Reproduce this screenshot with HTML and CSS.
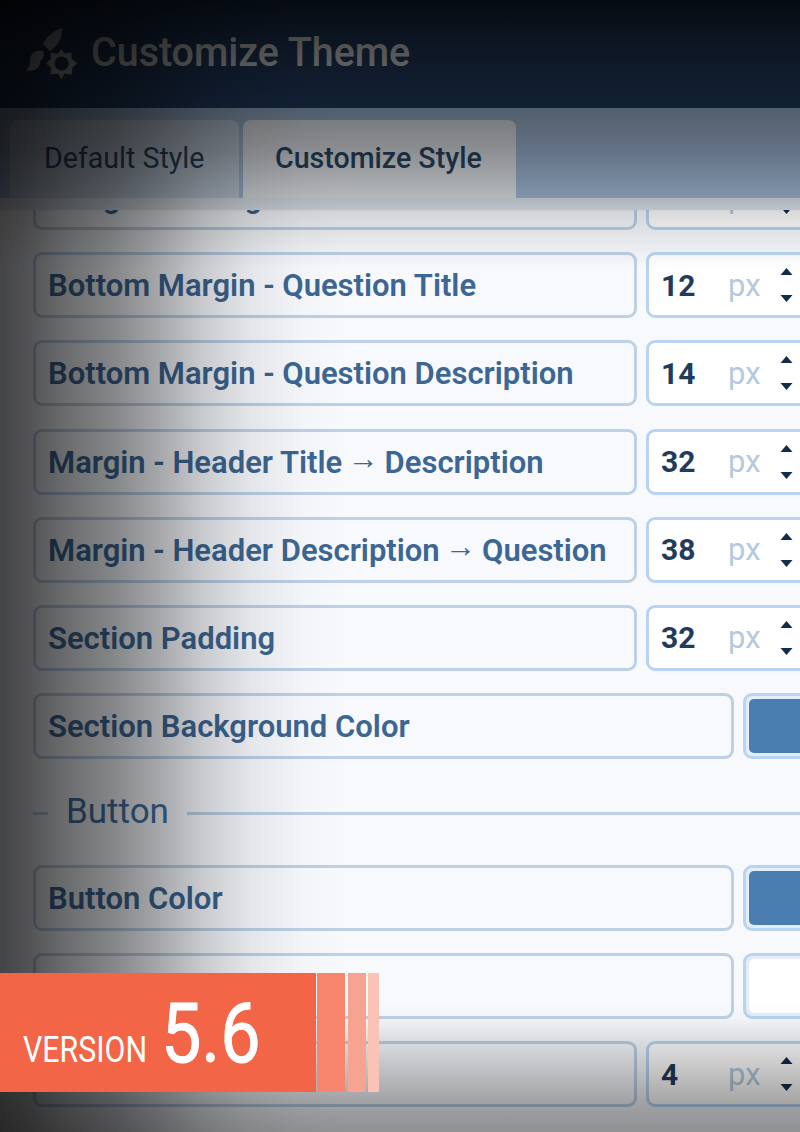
FILE: index.html
```
<!DOCTYPE html>
<html lang="en">
<head>
  <meta charset="UTF-8" />
  <meta name="viewport" content="width=device-width, initial-scale=1.0" />
  <title>Customize Theme</title>
  <link rel="stylesheet" href="styles.css">
</head>
<body>
  <div class="page">
    <header class="header">
      <svg class="header-icon" viewBox="0 0 52 54" width="52" height="54">
        <path d="M36 1C27 4 20 10 17 17L24 24C31 19 37 11 36 1Z" />
        <path d="M17 24C9 22 4 27 4 34C4 39 3 41 0 43C9 45 14 41 14 35L18 29Z" />
        <path fill-rule="evenodd" d="M35.5 22L38.5 26.500L45.500 25.500L45.500 32L51.500 36.500L46.500 40.500L45.500 47.500L38.500 46.500L35.500 52L32 46.500L24.500 47.500L25 40.500L20 36.500L25 32L24.500 25.500L32 26.500ZM35.500 29.500a7 7 0 1 0 .1 0Z" />
      </svg>
      <h1>Customize Theme</h1>
    </header>

    <nav class="tabs">
      <div class="tab"><span>Default Style</span></div>
      <div class="tab active"><span>Customize Style</span></div>
    </nav>

    <main class="panel">
      <div class="list" id="list"></div>
    </main>

    <div class="shade shade-top"></div>
    <div class="shade shade-left"></div>
    <div class="shade shade-bottom"></div>

    <div class="version">
      <div class="version-main">
        <span class="version-label">VERSION</span>
        <span class="version-number">5.6</span>
      </div>
      <i class="bar bar-1"></i>
      <i class="bar bar-2"></i>
      <i class="bar bar-3"></i>
    </div>
  </div>

  <script>
    const rows = [
      { label: "Margin - Rating", value: 12 },
      { label: "Bottom Margin - Question Title", value: 12 },
      { label: "Bottom Margin - Question Description", value: 14 },
      { label: "Margin - Header Title <i>→</i> Description", value: 32 },
      { label: "Margin - Header Description <i>→</i> Question", value: 38 },
      { label: "Section Padding", value: 32 },
      { label: "Section Background Color", color: "#4a7db0" },
      { title: "Button" },
      { label: "Button Color", color: "#4a7db0" },
      { label: "Button Text Color", color: "#ffffff" },
      { label: "", value: 4 }
    ];

    function field(row) {
      if (row.color) {
        return `<div class="color"><div class="swatch" style="background:${row.color}"></div></div>`;
      }
      return `
        <div class="number">
          <b>${row.value}</b>
          <span class="unit">px</span>
          <svg class="spin" viewBox="0 0 12 34" width="13" height="34">
            <path d="M0 7L6 0L12 7ZM0 27L6 34L12 27Z" />
          </svg>
        </div>`;
    }

    document.getElementById('list').innerHTML = rows.map(row => {
      if (row.title) {
        return `<div class="divider"><h2>${row.title}</h2></div>`;
      }
      return `
        <div class="row ${row.color ? 'row-color' : ''}">
          <div class="label">${row.label}</div>
          ${field(row)}
        </div>`;
    }).join('');
  </script>
</body>
</html>
```
FILE: styles.css
```
* {
  box-sizing: border-box;
}
body {
  margin: 0;
  font-family: Roboto, "Liberation Sans", sans-serif;
  background: #f7f9fd;
}
.page {
  position: relative;
  width: 800px;
  height: 1132px;
  overflow: hidden;
  display: flex;
  flex-direction: column;
}
.header {
  height: 108px;
  flex: none;
  display: flex;
  align-items: flex-start;
  padding: 27px 0 0 26px;
  background: #26446f;
}
.header-icon {
  fill: #f2f2f2;
}
h1 {
  margin: 4px 0 0 13px;
  font-size: 40px;
  line-height: 44px;
  font-weight: 500;
  color: #fff;
  white-space: nowrap;
  transform: scaleX(0.985);
  transform-origin: left;
}
.tabs {
  height: 102px;
  flex: none;
  display: flex;
  gap: 4px;
  padding: 12px 0 0 10px;
  background: #aac4e3;
  border-bottom: 12px solid #e9f1fa;
}
.tab {
  width: 229px;
  height: 78px;
  padding: 21px 0 0 34px;
  border-radius: 8px 8px 0 0;
  background: #d0dded;
  color: #2c4967;
  font-size: 29px;
  line-height: 34px;
  white-space: nowrap;
}
.tab span {
  display: inline-block;
  transform: scaleX(0.985);
  transform-origin: left;
}
.tab.active {
  width: 273px;
  padding-left: 32px;
  background: #f0f4f9;
  font-weight: 500;
}
.panel {
  flex: 1;
  min-height: 0;
  overflow: hidden;
}
.list {
  width: 860px;
  margin: -46px 0 0 33px;
}
.row {
  display: grid;
  grid-template-columns: 604px 200px;
  grid-template-rows: 66px;
  gap: 9px;
  margin-bottom: 22.2px;
}
.row-color {
  grid-template-columns: 701px 120px;
}
.label {
  padding: 0 12px;
  border: 3px solid #bdd1e6;
  border-radius: 9px;
  color: #3c6693;
  font-size: 31px;
  font-weight: 600;
  line-height: 61px;
  white-space: nowrap;
}
.label i {
  position: relative;
  top: -4px;
  margin: 0 -2px;
  font-style: normal;
  font-weight: 400;
}
.number {
  display: flex;
  align-items: center;
  padding-left: 12px;
  border: 3px solid #b9d4f2;
  border-radius: 9px;
  background: #fff;
  font-size: 31px;
}
.number b {
  width: 67px;
  color: #1f3c5c;
  font-size: 30px;
  font-weight: 700;
}
.unit {
  width: 52px;
  color: #b5cae0;
}
.spin {
  fill: #132c49;
}
.color {
  padding: 3px;
  border: 3px solid #b9d4f2;
  border-radius: 9px;
  background: #e4eefa;
}
.swatch {
  height: 100%;
  border-radius: 5px;
}
.divider {
  display: flex;
  align-items: center;
  height: 66px;
  margin: -3px 0 20.8px;
}
.divider::before,
.divider::after {
  content: "";
  height: 3px;
  margin-top: 4px;
  background: #bdd1e6;
}
.divider::before {
  width: 15px;
}
.divider::after {
  flex: 1;
}
h2 {
  width: 139px;
  margin: 0;
  padding-left: 18px;
  color: #44709f;
  font-size: 35px;
  font-weight: 400;
}

/* dark vignette over the page edges */
.shade {
  position: absolute;
  inset: 0;
}
.shade-top {
  background: linear-gradient(rgba(0,0,0,.84) 0, rgba(0,0,0,.67) 50px, rgba(0,0,0,.52) 108px, rgba(0,0,0,.42) 150px, rgba(0,0,0,.25) 197px, rgba(0,0,0,.2) 209px, rgba(0,0,0,.14) 212px, rgba(0,0,0,.07) 240px, rgba(0,0,0,0) 270px);
}
.shade-left {
  background: linear-gradient(to right, rgba(0,0,0,.72) 0, rgba(0,0,0,.68) 25px, rgba(0,0,0,.57) 65px, rgba(0,0,0,.47) 110px, rgba(0,0,0,.34) 155px, rgba(0,0,0,.18) 205px, rgba(0,0,0,.08) 250px, rgba(0,0,0,.02) 300px, rgba(0,0,0,0) 345px);
}
.shade-bottom {
  background: linear-gradient(to top, rgba(0,0,0,.42) 0, rgba(0,0,0,.35) 30px, rgba(0,0,0,.12) 90px, rgba(0,0,0,.02) 115px, rgba(0,0,0,0) 130px);
}

.version {
  position: absolute;
  left: 0;
  top: 973px;
  height: 119px;
  display: flex;
}
.version-main {
  display: flex;
  align-items: baseline;
  width: 316px;
  padding-left: 23px;
  background: #f26647;
  color: #fff;
  white-space: nowrap;
}
.version-label {
  width: 138px;
  font-size: 37px;
  transform: scaleX(0.82);
  transform-origin: left;
}
.version-number {
  font-size: 84px;
  line-height: 122px;
  -webkit-text-stroke: 1px #fff;
  transform: scaleX(0.855);
  transform-origin: left;
}
.bar-1 {
  width: 28px;
  margin-left: 1px;
  background: #f8856e;
}
.bar-2 {
  width: 18px;
  margin-left: 3px;
  background: #f7a391;
}
.bar-3 {
  width: 11px;
  margin-left: 2px;
  background: #fbc2b6;
}
```
